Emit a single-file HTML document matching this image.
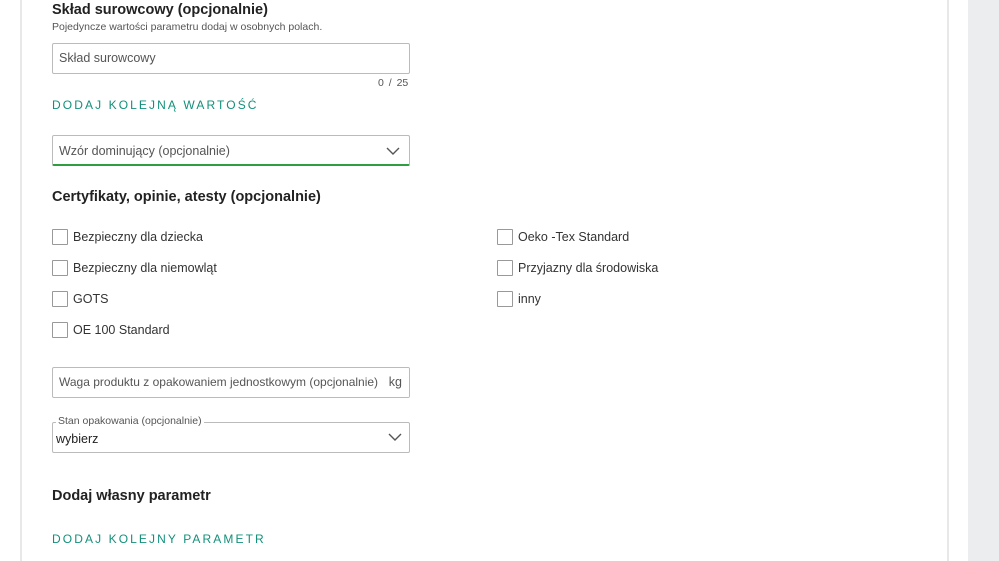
<!DOCTYPE html>
<html><head><meta charset="utf-8"><style>
*{box-sizing:border-box;margin:0;padding:0}
html,body{width:999px;height:561px;overflow:hidden}
body{background:#fff;font-family:"Liberation Sans",sans-serif;color:#222;position:relative}
.card{position:absolute;left:20px;top:-2px;width:929px;height:563px;border-left:2px solid #e8e8e8;border-right:2px solid #e8e8e8;background:#fff}
.side{position:absolute;left:968px;top:0;width:31px;height:561px;background:#ecedef}
.a{position:absolute}
h3{font-size:14.5px;font-weight:bold;color:#222}
.inp{position:absolute;left:52px;width:358px;height:31px;border:1px solid #bbb;border-radius:2px;font-size:12.5px;color:#555;padding-left:6px;line-height:29px;white-space:nowrap;overflow:hidden}
.link{font-size:12px;letter-spacing:2.1px;color:#12907a}
.cb{position:absolute;width:16px;height:16px;border:1px solid #999;border-radius:1px;background:#fff}
.lbl{position:absolute;font-size:12.5px;color:#333}
.chev{position:absolute;width:14px;height:9px}
</style></head><body>
<div class="card"></div>
<div class="side"></div>
<h3 class="a" style="left:52px;top:2px">Skład surowcowy (opcjonalnie)</h3>
<div class="a" style="left:52px;top:21px;font-size:10.5px;color:#555">Pojedyncze wartości parametru dodaj w osobnych polach.</div>
<div class="inp" style="top:43px">Skład surowcowy</div>
<div class="a" style="left:378px;top:77px;font-size:10.5px;color:#555;word-spacing:2px">0 / 25</div>
<div class="a link" style="left:52px;top:98px">DODAJ KOLEJNĄ WARTOŚĆ</div>
<div class="inp" style="top:135px;border-bottom:2px solid #2e9e3e;line-height:31px">Wzór dominujący (opcjonalnie)</div>
<svg class="chev" style="left:386px;top:147px" viewBox="0 0 14 9"><path d="M1 1L7 7L13 1" fill="none" stroke="#555" stroke-width="1.4"/></svg>
<h3 class="a" style="left:52px;top:189px">Certyfikaty, opinie, atesty (opcjonalnie)</h3>
<div class="cb" style="left:52px;top:229px"></div><div class="lbl" style="left:73px;top:230px">Bezpieczny dla dziecka</div>
<div class="cb" style="left:52px;top:260px"></div><div class="lbl" style="left:73px;top:261px">Bezpieczny dla niemowląt</div>
<div class="cb" style="left:52px;top:291px"></div><div class="lbl" style="left:73px;top:292px">GOTS</div>
<div class="cb" style="left:52px;top:322px"></div><div class="lbl" style="left:73px;top:323px">OE 100 Standard</div>
<div class="cb" style="left:497px;top:229px"></div><div class="lbl" style="left:518px;top:230px">Oeko -Tex Standard</div>
<div class="cb" style="left:497px;top:260px"></div><div class="lbl" style="left:518px;top:261px">Przyjazny dla środowiska</div>
<div class="cb" style="left:497px;top:291px"></div><div class="lbl" style="left:518px;top:292px">inny</div>
<div class="inp" style="top:367px"><span style="font-size:12px">Waga produktu z opakowaniem jednostkowym (opcjonalnie)</span><span style="position:absolute;right:0;top:0;background:#fff;padding:0 7px 0 6px">kg</span></div>
<div class="inp" style="top:422px;color:#222;padding-left:3px;line-height:32px">wybierz</div>
<div class="a" style="left:56px;top:415px;font-size:10.5px;color:#555;background:#fff;padding:0 2px">Stan opakowania (opcjonalnie)</div>
<svg class="chev" style="left:388px;top:433px" viewBox="0 0 14 9"><path d="M1 1L7 7L13 1" fill="none" stroke="#555" stroke-width="1.4"/></svg>
<h3 class="a" style="left:52px;top:488px">Dodaj własny parametr</h3>
<div class="a link" style="left:52px;top:532px">DODAJ KOLEJNY PARAMETR</div>
</body></html>
